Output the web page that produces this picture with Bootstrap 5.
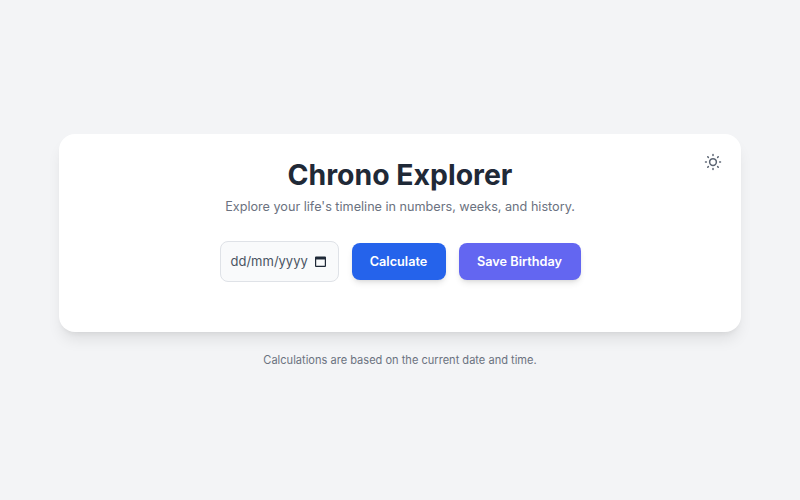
<!DOCTYPE html>
<html lang="en-GB">
<head>
<meta charset="utf-8">
<title>Chrono Explorer</title>
<link href="https://cdn.jsdelivr.net/npm/bootstrap@5.3.0/dist/css/bootstrap.min.css" rel="stylesheet">
<style>
html,body{height:100%}
body{background:#f3f4f6;font-family:Inter,"Liberation Sans",sans-serif;color:#1f2937}
.shell{width:682px;min-height:500px;padding-top:134px}
.panel{height:198px;background:#fff;border-radius:16px;box-shadow:0 10px 15px -3px rgba(0,0,0,.09),0 4px 6px -4px rgba(0,0,0,.09);padding:23px 32px}
.title{font-size:28.4px;line-height:36px;font-weight:700;color:#1f2937;margin:0 0 4px}
.sub{font-size:12.65px;line-height:20px;color:#6b7280;margin:0 0 24px}
.ctrls{gap:13px}
.date-in{width:119px;height:41px;background:#f9fafb;border:1px solid #dfe2e7;border-radius:8px;padding:0 11px 0 10px;font-size:13px;color:#4b5563}
.act{height:37px;border:0;border-radius:8px;padding:0;font-size:12.7px;font-weight:600;color:#fff;box-shadow:0 4px 6px -1px rgba(0,0,0,.1),0 2px 4px -2px rgba(0,0,0,.1)}
.act-blue{background:#2563eb;width:94px}
.act-violet{background:#6366f1;width:122px}
.act:hover{color:#fff}
.theme{top:16px;right:16px;width:24px;height:24px;color:#5b6472;background:none;border:0}
.note{font-size:11.07px;line-height:16px;color:#6b7280;margin:19px 0 0;padding-top:1px}
</style>
</head>
<body class="d-flex justify-content-center">
<div class="shell d-flex flex-column">
<main class="panel position-relative text-center">
<button class="theme position-absolute p-0 d-flex align-items-center justify-content-center" type="button" aria-label="Toggle theme">
<svg width="18" height="18" viewBox="0 0 24 24" fill="none" stroke="currentColor" stroke-width="2" stroke-linecap="round"><circle cx="12" cy="12" r="4.500"/><path d="M12 2v1.200M12 20.800V22M2 12h1.200M20.800 12H22M5 5l.8.8M18.200 18.200l.8.8M5 19l.8-.8M18.200 5.800 19 5"/></svg>
</button>
<h1 class="title">Chrono Explorer</h1>
<p class="sub">Explore your life's timeline in numbers, weeks, and history.</p>
<div class="ctrls d-flex justify-content-center align-items-center w-100">
<div class="date-in d-flex align-items-center justify-content-between"><span>dd/mm/yyyy</span>
<svg width="13" height="13" viewBox="0 0 13 13" aria-hidden="true"><path fill="#1f2937" fill-rule="evenodd" d="M2 1.500h9a1 1 0 0 1 1 1v8.500a1 1 0 0 1-1 1H2a1 1 0 0 1-1-1V2.500a1 1 0 0 1 1-1zM2.200 4.500V10.800h8.600V4.500z"/></svg></div>
<button class="btn act act-blue" type="button">Calculate</button>
<button class="btn act act-violet" type="button">Save Birthday</button>
</div>
</main>
<p class="note text-center">Calculations are based on the current date and time.</p>
</div>
</body>
</html>
